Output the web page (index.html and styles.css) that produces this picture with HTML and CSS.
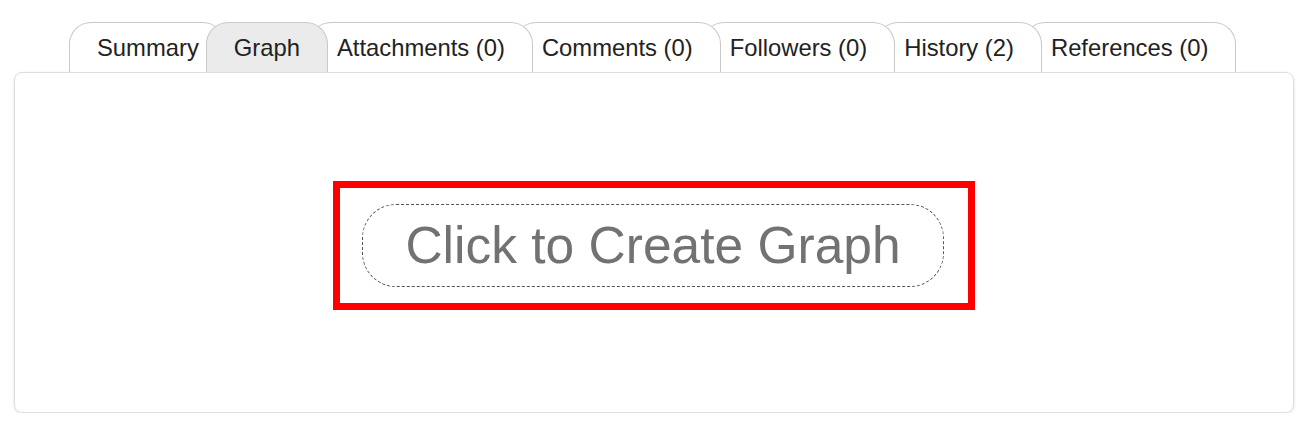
FILE: index.html
```html
<!DOCTYPE html>
<html lang="en">
<head>
  <meta charset="UTF-8" />
  <meta name="viewport" content="width=device-width, initial-scale=1" />
  <title>Graph</title>
  <link rel="stylesheet" href="styles.css">
</head>
<body>
  <div class="page">
    <ul class="tabs">
      <li class="tab">Summary</li>
      <li class="tab active">Graph</li>
      <li class="tab">Attachments (0)</li>
      <li class="tab">Comments (0)</li>
      <li class="tab">Followers (0)</li>
      <li class="tab">History (2)</li>
      <li class="tab">References (0)</li>
    </ul>
    <div class="panel">
      <div class="highlight">
        <div class="create-btn">Click to Create Graph</div>
      </div>
    </div>
  </div>
</body>
</html>
```

FILE: styles.css
```css
body {
  margin: 0;
  background: #ffffff;
  font-family: "Liberation Sans", Arial, Helvetica, sans-serif;
  color: #222;
}

.page {
  padding: 22px 14px 0 14px;
}

.tabs {
  list-style: none;
  display: flex;
  margin: 0 0 0 55px;
  padding: 0;
}

.tab {
  position: relative;
  height: 50px;
  box-sizing: border-box;
  line-height: 49px;
  padding: 0 27px;
  font-size: 23.8px;
  white-space: nowrap;
  background: #fff;
  border: 1px solid #c9c9c9;
  border-bottom: none;
  border-radius: 22px 22px 0 0;
  margin-left: -19px;
  cursor: pointer;
}

.tab:first-child {
  margin-left: 0;
  padding-right: 25px;
}

/* earlier tabs sit on top of later ones */
.tab:nth-child(1) { z-index: 7; }
.tab:nth-child(2) { z-index: 6; }
.tab:nth-child(3) { z-index: 5; }
.tab:nth-child(4) { z-index: 4; }
.tab:nth-child(5) { z-index: 3; }
.tab:nth-child(6) { z-index: 2; }
.tab:nth-child(7) { z-index: 1; }

.tab.active {
  background: #ebebeb;
  z-index: 10;
}

.panel {
  border: 1px solid #dedede;
  border-radius: 8px;
  box-shadow: 0 1px 3px rgba(0, 0, 0, 0.12);
  padding: 108px 0 102px 0;
  display: flex;
  justify-content: center;
}

.highlight {
  border: 7px solid #ff0000;
  padding: 16px 24px 16px 22px;
}

.create-btn {
  border: 1px dashed #555;
  border-radius: 34px;
  padding: 11px 42px;
  font-size: 51.5px;
  line-height: 59px;
  color: #727272;
  white-space: nowrap;
  cursor: pointer;
}
```
